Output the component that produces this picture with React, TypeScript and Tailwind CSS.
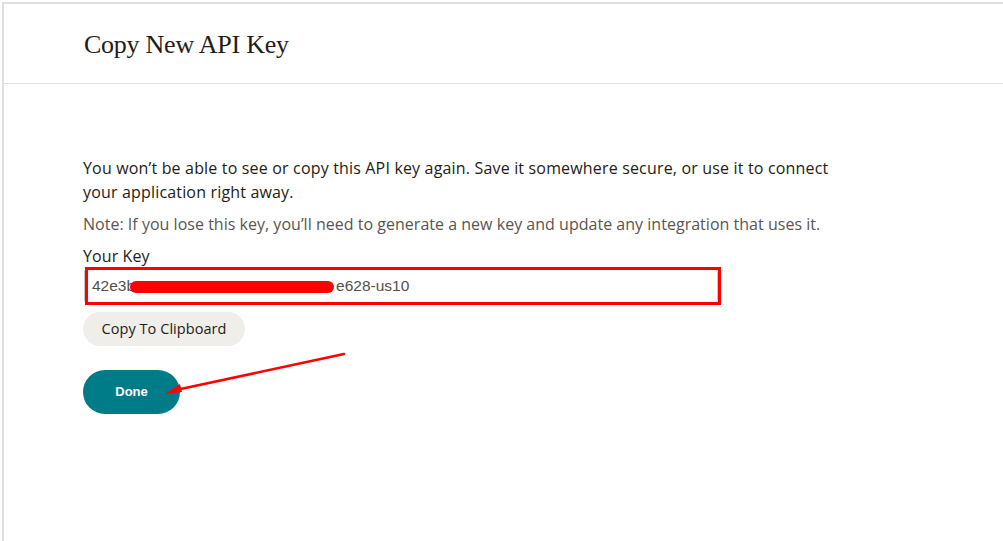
import React from "react";

export default function App() {
  const sans = { fontFamily: '"Open Sans", "Liberation Sans", sans-serif' };
  return (
    <div className="w-[1003px] h-[541px] bg-white pt-[2px] pl-[2px] overflow-hidden relative">
      <div className="h-full border-t-2 border-l-2 border-[#e0dfdd] flex flex-col">
        <div className="h-[80px] border-b border-[#e0dfdd] flex items-center pl-[80px] pt-[1px]">
          <h1
            className="text-[26px] text-[#241c15] tracking-[-0.25px]"
            style={{ fontFamily: '"Liberation Serif", "DejaVu Serif", serif' }}
          >
            Copy New API Key
          </h1>
        </div>
        <div className="pl-[79px] pt-[72px] flex flex-col" style={sans}>
          <p className="text-[16px] leading-[24px] text-[#241c15] w-[770px] tracking-[0.17px]">
            You won’t be able to see or copy this API key again. Save it somewhere secure, or use it to connect your application right away.
          </p>
          <p className="mt-[8px] text-[16px] leading-[24px] text-[#5a5551] tracking-[0.02px]">
            Note: If you lose this key, you’ll need to generate a new key and update any integration that uses it.
          </p>
          <label className="mt-[8px] text-[16px] leading-[24px] text-[#241c15] tracking-[0.1px]">Your Key</label>
          <div className="relative mt-[-1px] w-[638px] h-[38px]">
            <div className="absolute left-[1px] top-[2px] w-[634px] h-[34px] border border-[#c8c6c3] rounded-[3px] flex items-center pl-[7px] pb-[1px]">
              <div
                className="flex items-center text-[15.5px] text-[#54504c]"
                style={{ fontFamily: '"Liberation Sans", Arial, sans-serif' }}
              >
                <span>42e3b</span>
                <span className="w-[201px]" />
                <span>e628-us10</span>
              </div>
            </div>
            <div className="absolute left-[47px] top-[14px] w-[204px] h-[12px] rounded-full bg-[#ff0000]" />
            <div className="absolute top-0 left-[2px] w-[636px] h-[38px] border-[3px] border-[#ff0000]" />
          </div>
          <button className="mt-[7px] w-[162px] h-[34px] rounded-full bg-[#efeeea] text-[14.5px] text-[#241c15] tracking-[0.05px]">
            Copy To Clipboard
          </button>
          <button
            className="mt-[24px] w-[97px] h-[44px] rounded-full bg-[#007c89] text-white text-[13px] font-bold"
            style={{ fontFamily: '"Liberation Sans", Arial, sans-serif' }}
          >
            Done
          </button>
        </div>
      </div>
      <svg className="absolute left-0 top-0 pointer-events-none" width="1003" height="541">
        <line x1="344" y1="354" x2="176" y2="390" stroke="#ff0000" strokeWidth="2.5" strokeLinecap="round" />
        <polygon points="165,394 180,384 182,392" fill="#ff0000" />
      </svg>
    </div>
  );
}
